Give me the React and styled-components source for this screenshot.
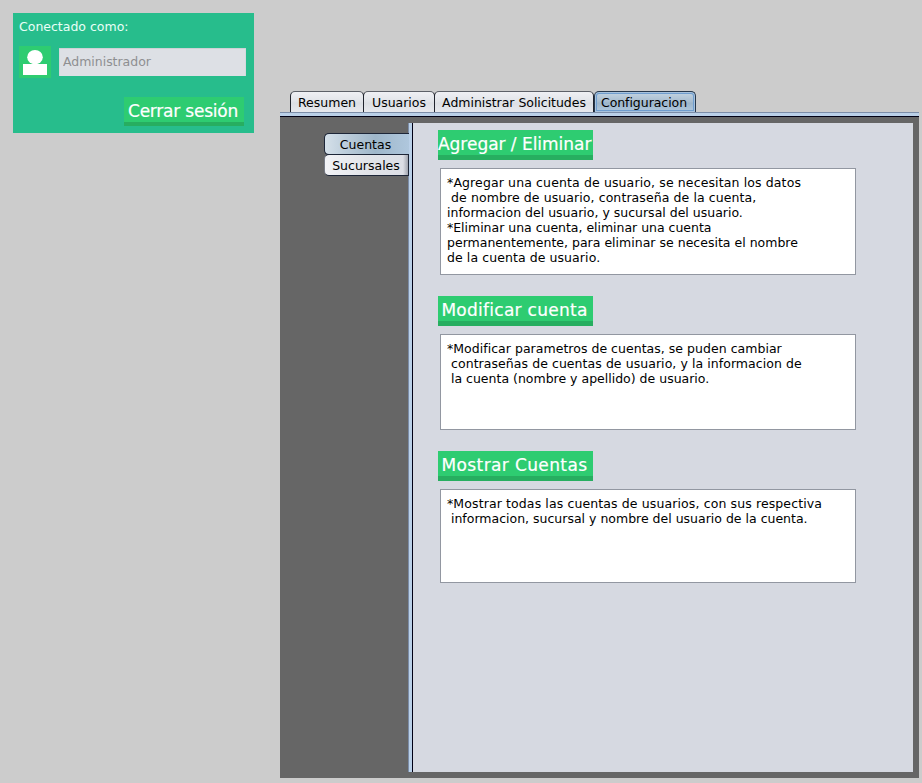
import React from "react";
import styled, { createGlobalStyle } from "styled-components";

const GlobalStyle = createGlobalStyle`
  * { box-sizing: border-box; }
  body {
    margin: 0;
    background: #cccccc;
    font: 12.5px/15px "DejaVu Sans", sans-serif;
    color: #000;
  }
`;

const Page = styled.div`
  width: 922px;
  height: 783px;
  display: flex;
  align-items: flex-start;
  overflow: hidden;
`;

const SessionCard = styled.section`
  width: 241px;
  height: 120px;
  margin: 13px 26px 0 13px;
  padding: 6px 8px 7px 6px;
  background: #27bd8c;
  color: #fff;
`;

const SessionLabel = styled.div`
  height: 27px;
  color: #e9fff7;
`;

const UserRow = styled.div`
  display: flex;
  gap: 8px;
`;

const UserIcon = styled.svg`
  width: 32px;
  height: 32px;
  display: block;
`;

const NameField = styled.input`
  width: 187px;
  height: 28px;
  margin-top: 2px;
  padding: 0 4px 2px;
  border: 0;
  box-shadow: inset 0 1px #cdd1d6, inset 1px 0 #d5d9de, inset -1px 0 #d5d9de;
  background: #dde0e5;
  color: #8e8f91;
  -webkit-text-fill-color: #8e8f91;
  opacity: 1;
  font: inherit;
  letter-spacing: -0.03px;
  border-radius: 0;
  outline: 0;
`;

const FlatButton = styled.button`
  display: block;
  width: ${(p) => p.$width}px;
  height: ${(p) => p.$height}px;
  padding: 2px 2px 0 0;
  border: 0;
  border-bottom: ${(p) => p.$edge}px solid #27ae60;
  background: #2ecc71;
  color: #fff;
  font: 17px/20px "DejaVu Sans", sans-serif;
  letter-spacing: ${(p) => p.$spacing || 0}px;
  -webkit-text-stroke: 0.2px #fff;
  white-space: nowrap;
`;

const LogoutButton = styled(FlatButton)`
  margin: 19px 2px 0 auto;
`;

const Workspace = styled.main`
  width: 639px;
  margin-top: 91px;
`;

const TabBar = styled.nav`
  display: flex;
  height: 21px;
  padding-left: 10px;
`;

const Tab = styled.div`
  width: ${(p) => p.$width}px;
  height: 21px;
  margin-right: -1px;
  border: 1px solid #20242e;
  border-top-color: #5d6068;
  border-bottom: 0;
  border-radius: 5px 5px 0 0;
  background: linear-gradient(#eff0f4, #e2e4e9 45%, #dcdfe4 55%, #e7e9ee);
  text-align: center;
  line-height: 22px;
  white-space: nowrap;
  letter-spacing: ${(p) => p.$spacing || 0}px;
`;

const ActiveTab = styled(Tab)`
  margin-left: 1px;
  padding-right: 2px;
  border-color: #26384d;
  background: linear-gradient(#c5d5e2, #a6bccf 50%, #9db5ca 55%, #b1c9df);
  box-shadow: inset 0 0 0 1px #a9c3dd, inset 0 0 0 2px #6f9dce;
`;

const TabRule = styled.div`
  height: 5px;
  border-top: 1px solid #7c8da8;
  border-bottom: 1px solid #000014;
  background: #bad0e8;
`;

const Body = styled.div`
  display: flex;
  height: 661px;
  padding: 6px;
  background: #666666;
`;

const SideTabs = styled.nav`
  position: relative;
  z-index: 1;
  width: 122px;
  padding: 10px 0 0 38px;
`;

const SideTab = styled.div`
  width: 85px;
  height: 22px;
  border: 1px solid #1d2638;
  border-right-width: ${(p) => (p.$active ? 0 : 1)}px;
  border-left-color: ${(p) => (p.$active ? "#1d2638" : "#777b85")};
  border-radius: 5px 0 0 5px;
  background: ${(p) =>
    p.$active
      ? "linear-gradient(90deg, #d5e0e9, #bccddb 25%, #9fb7ca 60%, #afc7dd)"
      : "linear-gradient(90deg, #f2f3f6, #e2e4e9 50%, #dcdfe6 94%, #a1a5af)"};
  padding-right: ${(p) => (p.$active ? 3 : 1)}px;
  text-align: center;
  line-height: 21px;
  & + & { margin-top: -1px; }
`;

const SideRule = styled.div`
  width: 5px;
  border-left: 1px solid #7c8da8;
  border-right: 1px solid #000014;
  background: #bad0e8;
`;

const Content = styled.div`
  flex: 1;
  padding: 7px 0 0 25px;
  background: #d6d9e1;
`;

const Note = styled.div`
  width: 416px;
  height: ${(p) => p.$height}px;
  margin: 8px 0 21px 2px;
  padding: 6px;
  border: 1px solid #9297a1;
  background: #fff;
  white-space: pre;
`;

const Line = styled.div`
  height: 15px;
  letter-spacing: ${(p) => p.$spacing || 0}px;
`;

const sections = [
  {
    title: "Agregar / Eliminar",
    spacing: -0.03,
    height: 107,
    lines: [
      ["*Agregar una cuenta de usuario, se necesitan los datos", 0.125],
      [" de nombre de usuario, contraseña de la cuenta,", 0.09],
      ["informacion del usuario, y sucursal del usuario.", 0],
      ["*Eliminar una cuenta, eliminar una cuenta", -0.02],
      ["permanentemente, para eliminar se necesita el nombre", 0.01],
      ["de la cuenta de usuario.", 0.08],
    ],
  },
  {
    title: "Modificar cuenta",
    spacing: 0.27,
    height: 96,
    lines: [
      ["*Modificar parametros de cuentas, se puden cambiar", 0.03],
      [" contraseñas de cuentas de usuario, y la informacion de", 0.06],
      [" la cuenta (nombre y apellido) de usuario.", 0],
    ],
  },
  {
    title: "Mostrar Cuentas",
    spacing: 0.38,
    height: 94,
    lines: [
      ["*Mostrar todas las cuentas de usuarios, con sus respectiva", 0.115],
      [" informacion, sucursal y nombre del usuario de la cuenta.", 0],
    ],
  },
];

export default function App() {
  return (
    <>
      <GlobalStyle />
      <Page>
        <SessionCard>
          <SessionLabel>Conectado como:</SessionLabel>
          <UserRow>
            <UserIcon viewBox="0 0 32 32">
              <rect width="32" height="32" fill="#2ecc71" />
              <ellipse cx="16" cy="11.2" rx="7.8" ry="7.2" fill="#fff" />
              <rect x="4" y="18" width="24" height="11" fill="#fff" />
            </UserIcon>
            <NameField defaultValue="Administrador" disabled />
          </UserRow>
          <LogoutButton $width={120} $height={29} $edge={4} $spacing={-0.22}>
            Cerrar sesión
          </LogoutButton>
        </SessionCard>
        <Workspace>
          <TabBar>
            <Tab $width={74}>Resumen</Tab>
            <Tab $width={72}>Usuarios</Tab>
            <Tab $width={160} $spacing={-0.03}>Administrar Solicitudes</Tab>
            <ActiveTab $width={102} $spacing={-0.05}>Configuracion</ActiveTab>
          </TabBar>
          <TabRule />
          <Body>
            <SideTabs>
              <SideTab $active>Cuentas</SideTab>
              <SideTab>Sucursales</SideTab>
            </SideTabs>
            <SideRule />
            <Content>
              {sections.map((s) => (
                <React.Fragment key={s.title}>
                  <FlatButton $width={155} $height={30} $edge={5} $spacing={s.spacing}>
                    {s.title}
                  </FlatButton>
                  <Note $height={s.height}>
                    {s.lines.map(([text, spacing]) => (
                      <Line key={text} $spacing={spacing}>{text}</Line>
                    ))}
                  </Note>
                </React.Fragment>
              ))}
            </Content>
          </Body>
        </Workspace>
      </Page>
    </>
  );
}
